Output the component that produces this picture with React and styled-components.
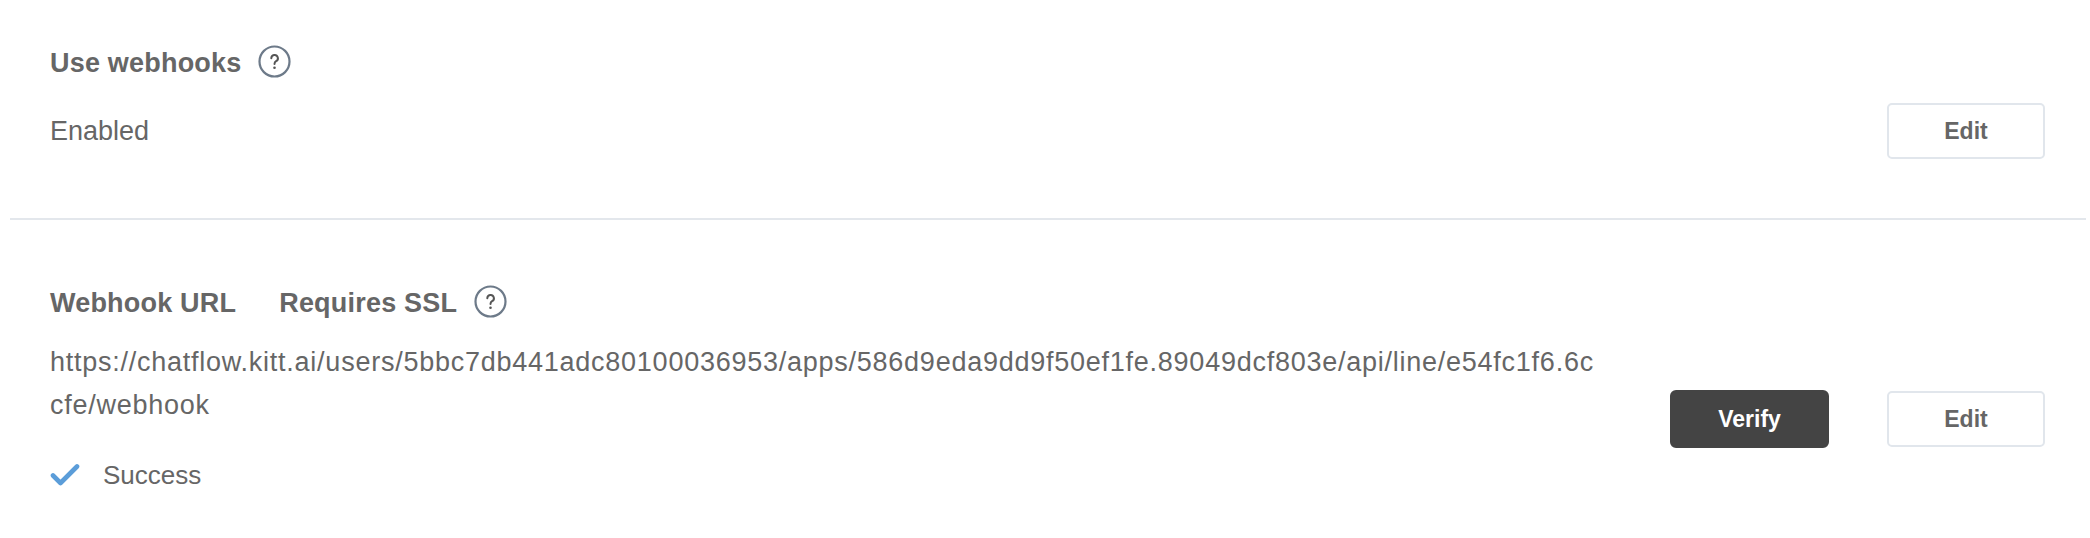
import React from 'react';
import styled, { createGlobalStyle } from 'styled-components';

const GlobalStyle = createGlobalStyle`
  body {
    margin: 0;
    background: #fff;
    font-family: 'Liberation Sans', Arial, sans-serif;
    color: #666;
  }
`;

const Page = styled.div`
  margin: 0 4px 0 10px;
`;

const Section = styled.section`
  padding: ${(p) => p.$top}px 41px ${(p) => p.$bottom}px 40px;

  & + & {
    border-top: 2px solid #e3e7ec;
  }
`;

const TitleRow = styled.div`
  display: flex;
  align-items: center;
  height: 36px;
`;

const Title = styled.h3`
  margin: 0 ${(p) => p.$space || 17}px 0 0;
  font-size: 27px;
  line-height: 36px;
  font-weight: 700;
  letter-spacing: 0.2px;
  color: #666;
`;

const HelpIcon = styled.svg`
  width: 33px;
  height: 33px;
  flex-shrink: 0;
  margin-bottom: 4px;
`;

const Row = styled.div`
  display: flex;
  align-items: center;
  justify-content: space-between;
  margin-top: ${(p) => p.$gap}px;
`;

const ValueBlock = styled.div`
  display: flex;
  flex-direction: column;
`;

const Value = styled.div`
  font-size: 27px;
  line-height: 43px;
  color: #666;
`;

const UrlValue = styled(Value)`
  width: 1555px;
  word-break: break-all;
  letter-spacing: 0.75px;
`;

const Status = styled.div`
  display: flex;
  align-items: center;
  gap: 23px;
  margin-top: 30px;
  font-size: 26px;
  line-height: 36px;
  color: #666;

  svg {
    width: 30px;
    height: 24px;
  }
`;

const Actions = styled.div`
  display: flex;
  align-items: center;
  gap: 58px;
  margin-top: ${(p) => p.$shift || 0}px;
`;

const Button = styled.button`
  box-sizing: border-box;
  width: ${(p) => (p.$dark ? 159 : 158)}px;
  height: ${(p) => (p.$dark ? 58 : 56)}px;
  border: 2px solid ${(p) => (p.$dark ? '#444' : '#e1e6ec')};
  border-radius: ${(p) => (p.$dark ? 6 : 5)}px;
  background: ${(p) => (p.$dark ? '#444' : '#fff')};
  color: ${(p) => (p.$dark ? '#fff' : '#666')};
  font-family: 'Liberation Sans', Arial, sans-serif;
  font-size: 23px;
  font-weight: 700;
  cursor: pointer;
`;

const Help = () => (
  <HelpIcon viewBox='0 0 33 33'>
    <circle cx='16.5' cy='16.5' r='15' fill='none' stroke='#6d7a89' strokeWidth='2.2' />
    <path
      d='M13.3 13.3a3.3 3.3 0 1 1 4.8 2.9c-1 .6-1.6 1.2-1.6 2.7'
      fill='none'
      stroke='#555'
      strokeWidth='2'
      strokeLinecap='round'
    />
    <circle cx='16.5' cy='22.8' r='1.3' fill='#555' />
  </HelpIcon>
);

const Check = () => (
  <svg viewBox='0 0 30 24'>
    <path
      d='M3 12.5L10.5 20L27 3.5'
      fill='none'
      stroke='#5b9dd9'
      strokeWidth='4.6'
      strokeLinecap='round'
      strokeLinejoin='round'
    />
  </svg>
);

const URL =
  'https://chatflow.kitt.ai/users/5bbc7db441adc80100036953/apps/586d9eda9dd9f50ef1fe.89049dcf803e/api/line/e54fc1f6.6ccfe/webhook';

export default function App() {
  return (
    <Page>
      <GlobalStyle />
      <Section $top={45} $bottom={59}>
        <TitleRow>
          <Title>Use webhooks</Title>
          <Help />
        </TitleRow>
        <Row $gap={22}>
          <Value>Enabled</Value>
          <Actions>
            <Button>Edit</Button>
          </Actions>
        </Row>
      </Section>
      <Section $top={65} $bottom={40}>
        <TitleRow>
          <Title $space={43}>Webhook URL</Title>
          <Title>Requires SSL</Title>
          <Help />
        </TitleRow>
        <Row $gap={20}>
          <ValueBlock>
            <UrlValue>{URL}</UrlValue>
            <Status>
              <Check />
              Success
            </Status>
          </ValueBlock>
          <Actions $shift={4}>
            <Button $dark>Verify</Button>
            <Button>Edit</Button>
          </Actions>
        </Row>
      </Section>
    </Page>
  );
}
